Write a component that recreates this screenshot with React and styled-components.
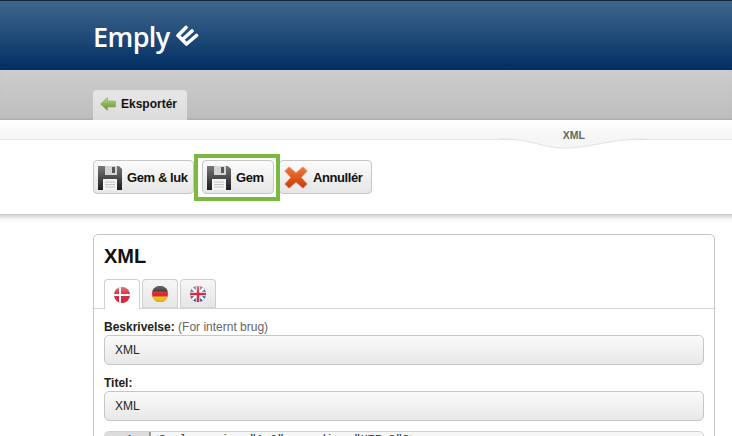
import styled, { createGlobalStyle } from "styled-components";

const Global = createGlobalStyle`
  html, body {
    margin: 0;
    height: 436px;
    overflow: hidden;
    background: #fff;
    font-family: "Liberation Sans", Arial, sans-serif;
  }
`;

const Header = styled.header`
  box-sizing: border-box;
  height: 70px;
  padding: 19px 0 0 93px;
  border-top: 1px solid #16283d;
  background: linear-gradient(#41668e, #002f63);
  display: flex;
  align-items: flex-start;
  gap: 5px;
`;

const LogoText = styled.span`
  font-family: "Open Sans", sans-serif;
  font-size: 27px;
  font-weight: 600;
  line-height: 34px;
  letter-spacing: -0.6px;
  color: #fff;
`;

const TabBar = styled.div`
  box-sizing: border-box;
  height: 50px;
  padding: 20px 0 0 93px;
  background: linear-gradient(#cdcdcd, #bdbdbd);
  box-shadow: inset 0 -2px 2px -1px #a9a9a9;
  display: flex;
`;

const ActiveTab = styled.div`
  width: 94px;
  height: 30px;
  box-sizing: border-box;
  padding: 0 0 2px 7px;
  background: linear-gradient(#e6e6e6, #dcdcdc);
  border-radius: 4px 4px 0 0;
  display: flex;
  align-items: center;
  gap: 5px;
  font-size: 12px;
  font-weight: 700;
  color: #111;
`;

const Strip = styled.div`
  position: relative;
  height: 19px;
  border-bottom: 1px solid #e2e2e2;
  background: linear-gradient(#fff, #f5f5f5);
  display: flex;
  justify-content: flex-end;
  padding-right: 147px;
  font-size: 10.5px;
  font-weight: 700;
  line-height: 30px;
  color: #666;
`;

const StripLabel = styled.span`
  position: relative;
  z-index: 1;
`;

const Notch = styled.svg`
  position: absolute;
  left: 500px;
  top: 18px;
`;

const Toolbar = styled.div`
  box-sizing: border-box;
  height: 74px;
  padding: 14px 0 0 93px;
  display: flex;
  align-items: flex-start;
`;

const Button = styled.div`
  box-sizing: border-box;
  height: 34px;
  width: ${(p) => p.$width}px;
  flex: none;
  padding-left: 4px;
  border: 1px solid #c6c6c6;
  border-radius: 4px;
  background: linear-gradient(#fbfbfb, #e6e6e6);
  display: flex;
  align-items: center;
  gap: 5px;
  font-size: 13px;
  font-weight: 700;
  letter-spacing: -0.4px;
  color: #111;
  margin-top: 6px;
`;

const Highlight = styled.div`
  position: relative;
  z-index: 1;
  box-sizing: border-box;
  width: 86px;
  height: 47px;
  margin-right: -1px;
  flex: none;
  border: 4px solid #7ab840;
  padding: 2px 0 0 4px;
  background: #fff;
  & > div {
    margin-top: 0;
  }
`;

const Divider = styled.div`
  height: 20px;
  background: linear-gradient(#cbcbcb, #f4f4f4 5px, #fff 9px);
`;

const Panel = styled.section`
  box-sizing: border-box;
  margin: 0 17px 0 93px;
  height: 240px;
  border: 1px solid #c6c6c6;
  border-radius: 5px;
  padding-top: 9px;
`;

const Title = styled.h1`
  margin: 0 0 0 10px;
  font-size: 20px;
  line-height: 25px;
  color: #111;
`;

const Tabs = styled.div`
  margin-top: 10px;
  height: 30px;
  box-sizing: border-box;
  padding-left: 10px;
  border-bottom: 1px solid #d5d5d5;
  display: flex;
  gap: 2px;
`;

const Tab = styled.div`
  box-sizing: border-box;
  width: 36px;
  height: ${(p) => (p.$active ? 30 : 29)}px;
  border: 1px solid #cfcfcf;
  border-bottom: ${(p) => (p.$active ? "none" : "1px solid #d5d5d5")};
  border-radius: 4px 4px 0 0;
  background: ${(p) => (p.$active ? "#fff" : "linear-gradient(#f6f6f6, #e6e6e6)")};
  display: flex;
  align-items: center;
  justify-content: center;
`;

const Form = styled.div`
  padding: 11px 10px 0;
`;

const Field = styled.div`
  margin-bottom: 11px;
  &:nth-child(2) {
    margin-bottom: 10px;
  }
`;

const Label = styled.div`
  height: 15px;
  font-size: 12px;
  line-height: 15px;
  font-weight: 700;
  color: #222;
  & span {
    font-weight: 400;
    color: #666;
  }
`;

const Input = styled.div`
  box-sizing: border-box;
  height: 30px;
  padding-left: 10px;
  border: 1px solid #c6c6c6;
  border-radius: 5px;
  background: linear-gradient(#fafafa, #e8e8e8);
  font-size: 12px;
  line-height: 28px;
  color: #222;
`;

const Code = styled.div`
  box-sizing: border-box;
  height: 30px;
  border: 1px solid #d2d2d2;
  border-radius: 5px 5px 0 0;
  background: #f6f6f6;
  display: flex;
  font-family: "Liberation Mono", monospace;
  font-size: 11.6px;
  line-height: 14px;
  color: #333;
`;

const Gutter = styled.div`
  box-sizing: border-box;
  width: 46px;
  padding: 0 0 0 5px;
  text-align: center;
  background: #dcdcdc;
  border-right: 2px solid #999;
`;

const CodeLine = styled.div`
  padding-left: 1px;
  white-space: pre;
`;

function Floppy() {
  return (
    <svg width="24" height="25" viewBox="0 0 24 25">
      <defs>
        <linearGradient id="fl" x1="0" y1="0" x2="0" y2="1">
          <stop offset="0" stopColor="#777" />
          <stop offset="1" stopColor="#1d1d1d" />
        </linearGradient>
      </defs>
      <path d="M0 1h21l3 3v21H0z" fill="url(#fl)" />
      <rect x="7" y="1" width="12" height="9" fill="#d4d4d4" />
      <rect x="14" y="2" width="3" height="6" fill="#555" />
      <rect x="5" y="14" width="14" height="11" fill="#f4f4f4" />
      <path d="M7 17h10M7 19.500h10M7 22h10" stroke="#c4c4c4" strokeWidth="1" />
    </svg>
  );
}

function Cross() {
  return (
    <svg width="24" height="25" viewBox="0 0 24 25">
      <defs>
        <linearGradient id="cr" x1="0" y1="0" x2="0" y2="1">
          <stop offset="0" stopColor="#f07a3c" />
          <stop offset="1" stopColor="#c63a08" />
        </linearGradient>
      </defs>
      <path
        d="M5 1.500 12 7.500 19 1.500 23.500 6 17.500 12.500 23.500 19 19 23.500 12 17.500 5 23.500 0.500 19 6.500 12.500 0.500 6z"
        fill="url(#cr)"
        stroke="#e6cbb8"
        strokeWidth="0.7"
        strokeLinejoin="round"
      />
    </svg>
  );
}

function BackArrow() {
  return (
    <svg width="16" height="16" viewBox="0 0 16 16">
      <defs>
        <linearGradient id="ar" x1="0" y1="0" x2="0" y2="1">
          <stop offset="0" stopColor="#bcd88c" />
          <stop offset="1" stopColor="#5f8f2a" />
        </linearGradient>
      </defs>
      <path d="M0.500 8 7.500 1.500V5H15.500v6H7.500v3.500z" fill="url(#ar)" stroke="#7ba648" strokeWidth="0.5" />
    </svg>
  );
}

function LogoMark() {
  return (
    <svg width="24" height="22" viewBox="0 0 24 22" style={{ flex: "none", marginTop: 5 }}>
      <path
        d="M11 2.500 3 10.500 11.500 19 21.500 10.500M7.500 14.500 17 6"
        fill="none"
        stroke="#fff"
        strokeWidth="3.600"
        strokeLinejoin="round"
        strokeLinecap="round"
      />
    </svg>
  );
}

function Flag({ id, children }) {
  return (
    <svg width="16" height="16" viewBox="0 0 16 16">
      <defs>
        <clipPath id={id}>
          <circle cx="8" cy="8" r="8" />
        </clipPath>
        <linearGradient id="gloss" x1="0" y1="0" x2="0" y2="1">
          <stop offset="0" stopColor="#fff" stopOpacity="0.35" />
          <stop offset="0.5" stopColor="#fff" stopOpacity="0" />
          <stop offset="1" stopColor="#000" stopOpacity="0.1" />
        </linearGradient>
      </defs>
      <g clipPath={`url(#${id})`}>
        {children}
        <rect width="16" height="16" fill="url(#gloss)" />
      </g>
    </svg>
  );
}

export default function App() {
  return (
    <>
      <Global />
      <Header>
        <LogoText>Emply</LogoText>
        <LogoMark />
      </Header>
      <TabBar>
        <ActiveTab>
          <BackArrow />
          Eksportér
        </ActiveTab>
      </TabBar>
      <Strip>
        <StripLabel>XML</StripLabel>
        <Notch width="145" height="12" viewBox="0 0 145 12">
          <path d="M0 1C35 1 40 10 65 10S110 1 145 1V0H0z" fill="#f6f6f6" />
          <path d="M0 1C35 1 40 10 65 10S110 1 145 1" fill="none" stroke="#e2e2e2" />
        </Notch>
      </Strip>
      <Toolbar>
        <Button $width={101}>
          <Floppy />
          Gem &amp; luk
        </Button>
        <Highlight>
          <Button $width={72}>
            <Floppy />
            Gem
          </Button>
        </Highlight>
        <Button $width={93}>
          <Cross />
          Annullér
        </Button>
      </Toolbar>
      <Divider />
      <Panel>
        <Title>XML</Title>
        <Tabs>
          <Tab $active>
            <Flag id="dk">
              <rect width="16" height="16" fill="#d6293f" />
              <path d="M0 8h16M6 0v16" stroke="#fff" strokeWidth="2" />
            </Flag>
          </Tab>
          <Tab>
            <Flag id="de">
              <rect width="16" height="16" fill="#d8262c" />
              <rect width="16" height="5.500" fill="#222" />
              <rect y="10.500" width="16" height="5.500" fill="#f5c518" />
            </Flag>
          </Tab>
          <Tab>
            <Flag id="uk">
              <rect width="16" height="16" fill="#2f4d96" />
              <path d="M0 0 16 16M16 0 0 16" stroke="#fff" strokeWidth="2.500" />
              <path d="M8 0v16M0 8h16" stroke="#fff" strokeWidth="4.500" />
              <path d="M8 0v16M0 8h16" stroke="#d6293f" strokeWidth="2.500" />
            </Flag>
          </Tab>
        </Tabs>
        <Form>
          <Field>
            <Label>
              Beskrivelse: <span>(For internt brug)</span>
            </Label>
            <Input>XML</Input>
          </Field>
          <Field>
            <Label>Titel:</Label>
            <Input>XML</Input>
          </Field>
          <Code>
            <Gutter>1</Gutter>
            <CodeLine>&lt;?xml version="1.0" encoding="UTF-8"?&gt;</CodeLine>
          </Code>
        </Form>
      </Panel>
    </>
  );
}
